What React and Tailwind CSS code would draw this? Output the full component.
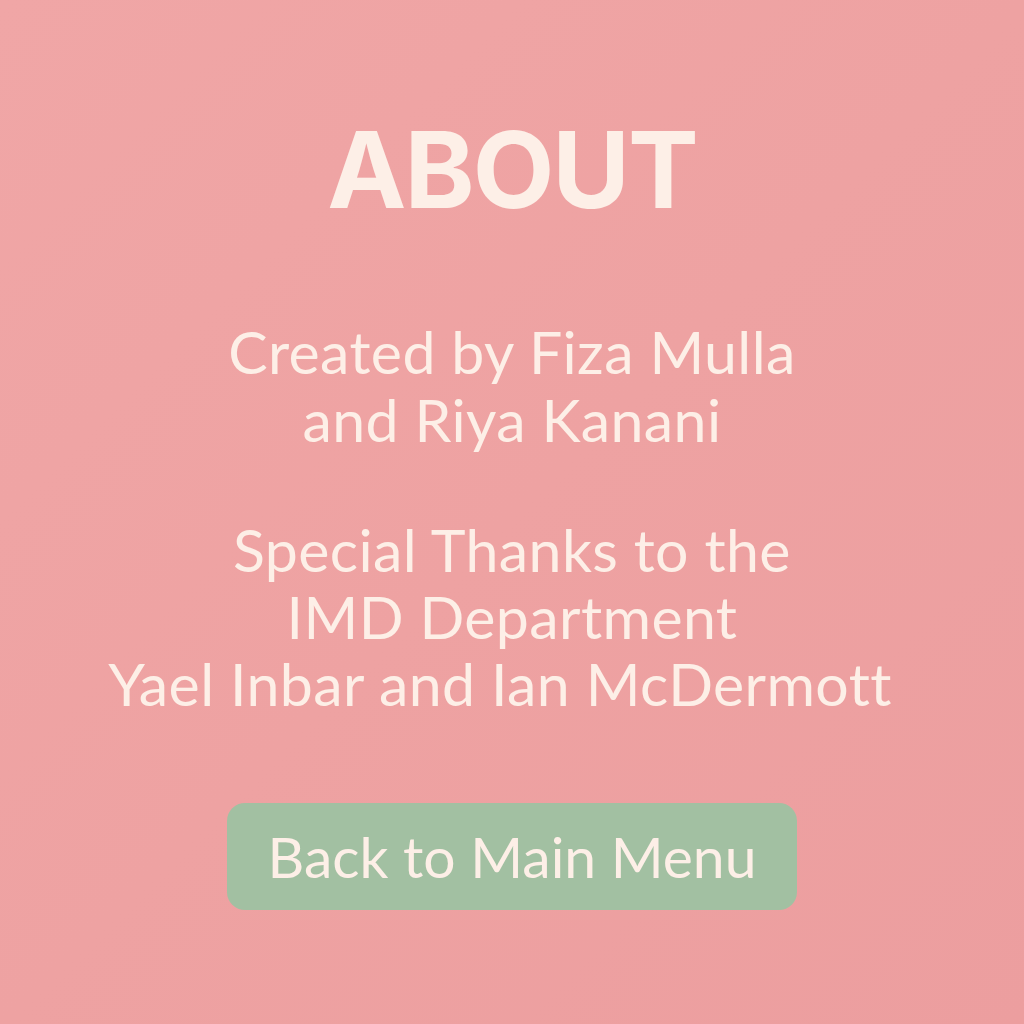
export default function App() {
  return (
    <div
      className="w-[1024px] h-[1024px] bg-gradient-to-br from-[#f0a6a6] via-[#eea2a2] to-[#ec9e9f] flex flex-col items-center text-[#fdefe7]"
      style={{ fontFamily: 'Lato, "Noto Sans", sans-serif' }}
    >
      <h1
        className="mt-[110px] text-[106px] leading-[120px] font-bold tracking-[-2px]"
        style={{ fontFamily: 'Inter, "Liberation Sans", sans-serif' }}
      >
        ABOUT
      </h1>
      <div className="mt-[88px] text-[59px] leading-[68px] tracking-[0.4px] text-center">
        <p>Created by Fiza Mulla</p>
        <p>and Riya Kanani</p>
      </div>
      <div className="mt-[62px] text-[59px] leading-[67px] tracking-[0.4px] text-center">
        <p>Special Thanks to the</p>
        <p>IMD Department</p>
        <p className="pr-[24px]">Yael Inbar and Ian McDermott</p>
      </div>
      <button className="mt-[86px] w-[570px] h-[107px] rounded-[18px] bg-[#a2c0a2] text-[57px] text-[#fdefe7]">
        Back to Main Menu
      </button>
    </div>
  );
}
